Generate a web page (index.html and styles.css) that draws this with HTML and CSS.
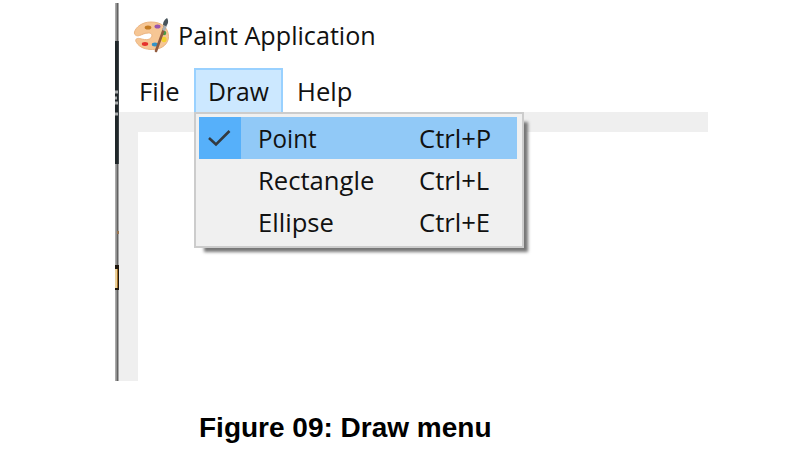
FILE: index.html
```html
<!DOCTYPE html>
<html lang="en">
<head>
<meta charset="utf-8">
<title>Paint Application</title>
<link rel="stylesheet" href="styles.css">
</head>
<body>
<figure class="figure">
  <div class="shot">
    <svg class="edge" width="4" height="378" viewBox="0 0 4 378" aria-hidden="true">
      <rect width="4" height="378" fill="#a9a9a9"/>
      <rect x="2" width="1" height="378" fill="#626262"/>
      <rect x="1" width="1" height="378" fill="#8f8f8f"/>
      <rect y="38" width="3" height="123" fill="#20272a"/>
      <rect x="3" y="38" width="1" height="123" fill="#3c4245"/>
      <path d="M0 89h3M0 95h2M0 100h3M0 111h3" stroke="#a9acad" stroke-width="3"/>
      <rect x="2" y="228" width="2" height="3" fill="#98744f"/>
      <rect y="262" width="4" height="25" fill="#20180e"/>
      <rect y="266" width="2" height="19" fill="#ead09a"/>
      <rect x="2" y="266" width="1" height="19" fill="#a26d24"/>
    </svg>
    <div class="window">
      <header class="titlebar">
        <svg class="icon" width="38" height="38" viewBox="0 0 38 38" aria-hidden="true">
          <path d="M18 6C9 6 3 11 1.500 16c-.5 3 2 4.500 5 3.500 3-1 5-2.500 9-2.500 3 0 4 2 3 4-2 4-8 2.500-12 1.500-3-.5-5 1-3 4 3 5 9 7 16 7 10 0 16-6 16-13C35.500 12 29 6 18 6Z" fill="#f6c694" stroke="#ebb482"/>
          <ellipse cx="15" cy="11.500" rx="3.300" ry="2" fill="#c47a22"/>
          <ellipse cx="24.500" cy="10.500" rx="3" ry="2" fill="#9a55ad"/>
          <ellipse cx="31" cy="17" rx="2.300" ry="2.300" fill="#4c9a47"/>
          <ellipse cx="31" cy="23.500" rx="2.600" ry="2.800" fill="#f2d22c"/>
          <ellipse cx="12" cy="28" rx="3.200" ry="1.900" fill="#e5322d"/>
          <ellipse cx="22" cy="28.500" rx="3.200" ry="1.900" fill="#3393c7"/>
          <path d="M32 10 23 35" stroke="#925b3e" stroke-width="2.600" stroke-linecap="round"/>
          <path d="m33 8-2.500 6.500" stroke="#a9b1b5" stroke-width="3"/>
          <path d="M34 2c-3 2-4 4-4 7l3 1c2-2 3-5 1-8Z" fill="#47535a"/>
        </svg>
        <span class="title"><span class="t t-title">Paint Application</span></span>
      </header>
      <nav class="menubar">
        <div class="item file"><span class="t">File</span></div>
        <div class="item draw"><span class="t t-draw">Draw</span>
          <div class="menu">
            <div class="row selected"><span class="check"><svg width="42" height="42" viewBox="0 0 42 42" aria-hidden="true"><path d="m10 21 7 6.500L30.500 14" fill="none" stroke="#333a40" stroke-width="2.600"/></svg></span><span class="name"><span class="t t-point">Point</span></span><span class="t">Ctrl+P</span></div>
            <div class="row"><span class="check"></span><span class="name"><span class="t">Rectangle</span></span><span class="t">Ctrl+L</span></div>
            <div class="row"><span class="check"></span><span class="name"><span class="t">Ellipse</span></span><span class="t">Ctrl+E</span></div>
          </div>
        </div>
        <div class="item help"><span class="t">Help</span></div>
      </nav>
      <main class="client"><div class="canvas"></div></main>
    </div>
  </div>
  <figcaption class="caption">Figure 09: Draw menu</figcaption>
</figure>
</body>
</html>
```

FILE: styles.css
```css
* { box-sizing: border-box; }
body { margin: 0; background: #fff; color: #111; font: 26px/42px "Open Sans", "Noto Sans", sans-serif; overflow: hidden; }
.figure { margin: 0; padding: 3px 0 0 115px; }
.shot { display: flex; width: 593px; height: 378px; }
.edge { display: block; flex: none; }
.window { flex: 1; display: flex; flex-direction: column; }
.titlebar { display: flex; height: 65px; padding: 13px 0 0 14px; }
.icon { display: block; flex: none; }
.title { margin: -2px 0 0 7px; }
.t { display: inline-block; white-space: nowrap; transform-origin: left center; transform: scaleX(.985); }
.t-title { transform: scaleX(.968); }
.t-draw { transform: scaleX(.95); }
.t-point { transform: scaleX(.93); }
.menubar { display: flex; height: 44px; padding-left: 6px; }
.item { position: relative; padding: 2px 0 0 14px; }
.file { width: 69px; }
.draw { width: 89px; height: 44px; background: #cce8ff; border: 2px solid #99d1ff; border-bottom: 0; padding: 0 0 0 12px; }
.menu { position: absolute; z-index: 1; left: -2px; top: 42px; width: 330px; height: 136px; padding: 3px 5px 0 3px; background: #f0f0f0; border: 2px solid #ccc; box-shadow: 7px 7px 3px -3px #777; }
.row { display: flex; height: 42px; }
.selected { background: #91c9f7; }
.check { flex: none; width: 42px; height: 42px; }
.check svg { display: block; }
.selected .check { background: #56b0fa; }
.name { width: 178px; padding-left: 17px; }
.client { flex: 1; padding: 20px 0 0 19px; background: #efefef; }
.canvas { height: 100%; background: #fff; }
.caption { margin-left: 84px; padding-top: 26px; color: #000; font: bold 28px/42px "Liberation Sans", Arial, sans-serif; }
```
